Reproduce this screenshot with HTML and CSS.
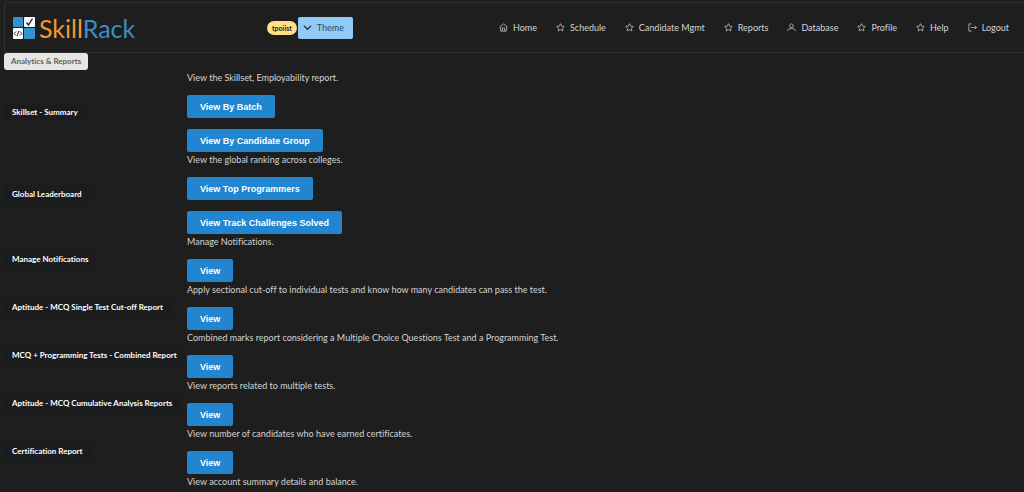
FILE: index.html
```html
<!DOCTYPE html>
<html lang="en">
<head>
  <meta charset="UTF-8">
  <meta name="viewport" content="width=device-width, initial-scale=1.0">
  <title>SkillRack - Analytics &amp; Reports</title>
  <link rel="stylesheet" href="styles.css">
</head>
<body>
  <!-- Shared icons -->
  <svg class="icon-defs" aria-hidden="true">
    <symbol id="star" viewBox="0 0 20 20">
      <path d="M10 1.5l2.6 5.4 5.9.8-4.3 4.1 1.1 5.9-5.3-2.9-5.3 2.9 1.1-5.9-4.3-4.1 5.9-.8z"/>
    </symbol>
    <symbol id="home" viewBox="0 0 20 20">
      <path d="M1 9L10 2l9 7M3.500 8v10h13V8M7.500 18v-7h5v7"/>
    </symbol>
    <symbol id="user" viewBox="0 0 20 20">
      <circle cx="10" cy="6" r="4"/>
      <path d="M1.500 18c0-4 2.500-5.500 5-5.500h7c2.500 0 5 1.500 5 5.500"/>
    </symbol>
    <symbol id="logout" viewBox="0 0 20 20">
      <path d="M8 2H2v16h6M7 10h12M15 6l4 4-4 4"/>
    </symbol>
  </svg>

  <header class="navbar">
    <a class="logo" href="#">
      <svg class="logo-mark" viewBox="0 0 22 22" aria-hidden="true">
        <rect class="blue" x="0" y="0" width="10" height="10" rx="1"/>
        <rect class="white" x="11" y="0" width="11" height="10" rx="1"/>
        <rect class="white" x="0" y="11" width="10" height="11" rx="1"/>
        <rect class="blue" x="11" y="11" width="11" height="11" rx="1"/>
        <path class="mark" d="M13.500 5.500l2 2.500 4-6.500"/>
        <path class="code" d="M3 14.500l-2 2 2 2M7 14.500l2 2-2 2M5.800 14l-1.600 5"/>
      </svg>
      <span class="logo-text"><span class="skill">Skill</span><span class="rack">Rack</span></span>
    </a>

    <div class="account">
      <span class="badge">tpoiist</span>
      <button class="theme-button" type="button">
        <svg class="chevron" viewBox="0 0 10 10" aria-hidden="true"><path d="M1 3l4 4 4-4"/></svg>
        Theme
      </button>
    </div>

    <nav class="menu">
      <a href="#"><svg class="icon"><use href="#home"/></svg>Home</a>
      <a href="#"><svg class="icon"><use href="#star"/></svg>Schedule</a>
      <a href="#"><svg class="icon"><use href="#star"/></svg>Candidate Mgmt</a>
      <a href="#"><svg class="icon"><use href="#star"/></svg>Reports</a>
      <a href="#"><svg class="icon"><use href="#user"/></svg>Database</a>
      <a href="#"><svg class="icon"><use href="#star"/></svg>Profile</a>
      <a href="#"><svg class="icon"><use href="#star"/></svg>Help</a>
      <a href="#"><svg class="icon"><use href="#logout"/></svg>Logout</a>
    </nav>
  </header>

  <main>
    <h1 class="page-title">Analytics &amp; Reports</h1>

    <table class="reports">
      <tr>
        <th scope="row"><span class="label">Skillset - Summary</span></th>
        <td>
          <p>View the Skillset, Employability report.</p>
          <button class="btn" type="button">View By Batch</button>
          <button class="btn" type="button">View By Candidate Group</button>
        </td>
      </tr>
      <tr>
        <th scope="row"><span class="label">Global Leaderboard</span></th>
        <td>
          <p>View the global ranking across colleges.</p>
          <button class="btn" type="button">View Top Programmers</button>
          <button class="btn" type="button">View Track Challenges Solved</button>
        </td>
      </tr>
      <tr>
        <th scope="row"><span class="label">Manage Notifications</span></th>
        <td>
          <p>Manage Notifications.</p>
          <button class="btn" type="button">View</button>
        </td>
      </tr>
      <tr>
        <th scope="row"><span class="label">Aptitude - MCQ Single Test Cut-off Report</span></th>
        <td>
          <p>Apply sectional cut-off to individual tests and know how many candidates can pass the test.</p>
          <button class="btn" type="button">View</button>
        </td>
      </tr>
      <tr>
        <th scope="row"><span class="label">MCQ + Programming Tests - Combined Report</span></th>
        <td>
          <p>Combined marks report considering a Multiple Choice Questions Test and a Programming Test.</p>
          <button class="btn" type="button">View</button>
        </td>
      </tr>
      <tr>
        <th scope="row"><span class="label">Aptitude - MCQ Cumulative Analysis Reports</span></th>
        <td>
          <p>View reports related to multiple tests.</p>
          <button class="btn" type="button">View</button>
        </td>
      </tr>
      <tr>
        <th scope="row"><span class="label">Certification Report</span></th>
        <td>
          <p>View number of candidates who have earned certificates.</p>
          <button class="btn" type="button">View</button>
        </td>
      </tr>
      <tr>
        <th></th>
        <td>
          <p>View account summary details and balance.</p>
        </td>
      </tr>
    </table>
  </main>
</body>
</html>
```
FILE: styles.css
```css
* {
  margin: 0;
  padding: 0;
  box-sizing: border-box;
}

body {
  font-family: Lato, "Open Sans", sans-serif;
  font-size: 9px;
  font-variant-ligatures: none;
  line-height: 14px;
  color: #d4d4d4;
  background-color: #1e1e1e;
  padding: 2px 0 0 4px;
}

.icon-defs {
  display: none;
}

/* Top bar */
.navbar {
  display: flex;
  align-items: center;
  height: 51px;
  padding: 0 15px 0 8px;
  border: 1px solid #303030;
  border-right: none;
  border-radius: 3px 0 0 3px;
}

.logo {
  display: flex;
  align-items: center;
  gap: 4px;
  width: 254px;
  text-decoration: none;
}

.logo-mark {
  width: 22px;
  height: 22px;
}

.logo-mark .blue {
  fill: #3294cf;
}

.logo-mark .white {
  fill: #fff;
}

.logo-mark path {
  fill: none;
  stroke: #222;
}

.logo-mark .mark {
  stroke-width: 1.4;
}

.logo-mark .code {
  stroke-width: 1;
}

.logo-text {
  font-size: 25px;
  line-height: 28px;
}

.skill {
  color: #f09a2c;
}

.rack {
  color: #3c8dc5;
}

.account {
  display: flex;
  align-items: center;
  gap: 1px;
}

.badge {
  padding: 0 5px;
  font-size: 7px;
  font-weight: 700;
  color: #212529;
  background-color: #ffe082;
  border-radius: 7px;
}

.theme-button {
  display: flex;
  align-items: center;
  gap: 5px;
  height: 22px;
  padding: 0 9px 0 5px;
  font-family: inherit;
  font-size: 9px;
  color: #2c4a63;
  background-color: #90caf9;
  border: none;
  border-radius: 2px;
  cursor: pointer;
}

.chevron {
  width: 9px;
  height: 9px;
  fill: none;
  stroke: #1f3a50;
  stroke-width: 1.4;
}

.menu {
  display: flex;
  gap: 19px;
  margin-left: auto;
}

.menu a {
  display: flex;
  align-items: center;
  gap: 5px;
  color: #d4d4d4;
  text-decoration: none;
}

.menu a:hover {
  color: #fff;
}

.icon {
  width: 9px;
  height: 9px;
  fill: none;
  stroke: #b0b0b0;
  stroke-width: 2;
}

/* Reports */
.page-title {
  width: fit-content;
  padding: 2px 7px;
  font-size: 8px;
  font-weight: 700;
  line-height: 13px;
  color: #606060;
  background-color: #e6e6e6;
  border-radius: 3px;
}

.reports {
  border-collapse: collapse;
  margin-top: 1px;
}

.reports th {
  width: 183px;
  text-align: left;
  vertical-align: middle;
}

.label {
  display: inline-block;
  padding: 2px 8px;
  font-size: 8px;
  font-weight: 700;
  color: #fff;
  white-space: nowrap;
  background-color: #1b1c1e;
  border-radius: 3px;
}

.btn {
  display: block;
  height: 23px;
  margin-top: 11px;
  padding: 0 13px;
  font-family: "Liberation Sans", Arial, sans-serif;
  font-size: 9px;
  font-weight: 700;
  color: #fff;
  background-color: #2185d0;
  border: none;
  border-radius: 2px;
  cursor: pointer;
}

.btn:hover {
  background-color: #1a75ba;
}

/* first button sits closer to the description */
p + .btn {
  margin-top: 10px;
}

.reports td {
  padding-bottom: 1px;
}
```
